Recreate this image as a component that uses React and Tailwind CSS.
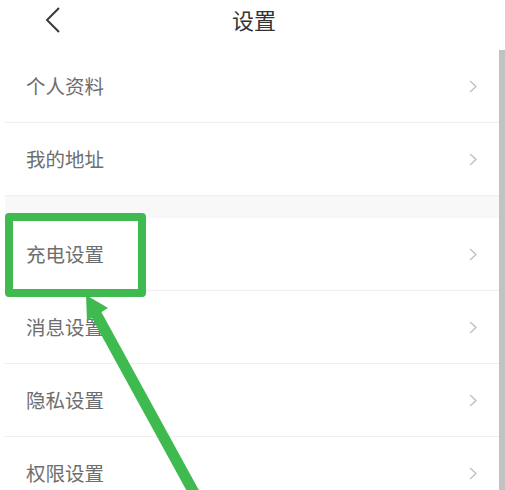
import React from "react";

const rowsTop = ["个人资料", "我的地址"];
const rowsBottom = ["充电设置", "消息设置", "隐私设置", "权限设置"];

const Chevron = () => (
  <svg width="8" height="13" viewBox="0 0 8 13" fill="none">
    <path d="M1 1l6 5.5L1 12" stroke="#bdbdbd" strokeWidth="1.3" />
  </svg>
);

const Row = ({ label }) => (
  <div className="h-[73px] flex items-center justify-between border-b border-[#efefef] pl-[21px] pr-[28px]">
    <span className="text-[19.5px] text-[#6e6e6e] mt-[2px]">{label}</span>
    <Chevron />
  </div>
);

const App = () => {
  return (
    <div
      className="relative w-[505px] h-[490px] overflow-hidden bg-white"
      style={{ fontFamily: '"Noto Sans", "Noto Sans CJK SC", sans-serif' }}
    >
      {/* Header */}
      <div className="relative h-[50px] flex items-center justify-center">
        <svg
          className="absolute left-[44px] top-[7px]"
          width="18"
          height="26"
          viewBox="0 0 18 26"
          fill="none"
        >
          <path d="M15 1L3 13l12 12" stroke="#3a3a3a" strokeWidth="2" />
        </svg>
        <span className="text-[22px] text-[#333] -mt-[10px] ml-[3px]">设置</span>
      </div>

      {/* List */}
      <div className="pl-[5px]">
        {rowsTop.map((r) => (
          <Row key={r} label={r} />
        ))}
        <div className="h-[22px] bg-[#f8f8f8]" />
        {rowsBottom.map((r) => (
          <Row key={r} label={r} />
        ))}
      </div>

      {/* Scrollbar */}
      <div className="absolute right-0 top-[50px] bottom-0 w-[6px] bg-[#c2c2c2]" />

      {/* Highlight box */}
      <div className="absolute left-[5px] top-[213px] w-[141px] h-[84px] border-[8px] border-[#3fba4f] rounded-[4px]" />

      {/* Arrow */}
      <svg
        className="absolute left-0 top-0"
        width="505"
        height="490"
        viewBox="0 0 505 490"
      >
        <line
          x1="95"
          y1="312"
          x2="198"
          y2="500"
          stroke="#3fba4f"
          strokeWidth="11"
        />
        <polygon points="86,295 108,308 87,321" fill="#3fba4f" />
      </svg>
    </div>
  );
};

export default App;
